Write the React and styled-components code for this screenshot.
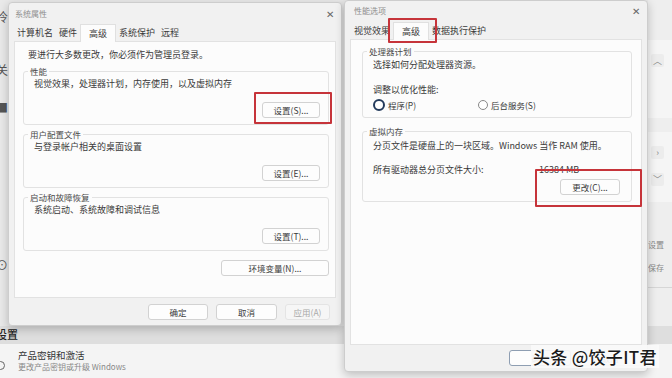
import React from 'react'
import styled, { createGlobalStyle, css } from 'styled-components'

const GlobalStyle = createGlobalStyle`
  html, body { margin: 0; padding: 0; }
  body {
    width: 672px;
    height: 378px;
    overflow: hidden;
    font-family: "Noto Sans CJK SC", "Noto Sans", sans-serif;
  }
  * { box-sizing: border-box; }
`

// 背景的设置页面
const Desktop = styled.div`
  position: relative;
  width: 672px;
  height: 378px;
  overflow: hidden;
  background: #e9e9e9;
  display: flex;
  flex-direction: column;
`
const BgTop = styled.div`
  flex: 1;
  display: flex;
  justify-content: space-between;
`
const LeftRail = styled.div`
  width: 10px;
  display: flex;
  flex-direction: column;
  padding-top: 10px;
`
const RailGlyph = styled.span`
  margin-left: -4px;
  margin-top: ${({ $gap }) => $gap}px;
  font-size: 12px;
  line-height: 14px;
  color: #555;
`
const RightRail = styled.div`
  width: 24px;
  display: flex;
  flex-direction: column;
  padding-top: 40px;
  background: #eeeeee;
`
const RailCard = styled.div`
  height: ${({ $h }) => $h}px;
  margin-top: ${({ $gap }) => $gap || 0}px;
  background: #f5f5f5;
  display: flex;
  flex-direction: column;
  gap: 14px;
  padding: 14px 0 0 3px;
`
const Chevron = styled.span`
  width: 13px;
  height: 13px;
  display: flex;
  align-items: center;
  justify-content: center;
  font-size: 9px;
  color: #888;
  background: #ececec;
  border-radius: 2px;
`
const RailText = styled.span`
  margin-top: ${({ $gap }) => $gap}px;
  font-size: 8px;
  line-height: 11px;
  color: #888;
`
const RailLine = styled.div`
  margin-top: 14px;
  height: 1px;
  background: #d6d6d6;
`
const SectionTitle = styled.div`
  height: 18px;
  margin-left: -4px;
  font-size: 11px;
  line-height: 16px;
  font-weight: 500;
  color: #222;
  background: #dedede;
`
const ItemRow = styled.div`
  height: 34px;
  background: #f4f4f4;
  display: flex;
  align-items: center;
  gap: 13px;
  margin-left: -4px;
`
const ItemIcon = styled.span`
  width: 9px;
  height: 9px;
  border-radius: 50%;
  border: 1.5px solid #666;
  margin-top: 8px;
`
const ItemTexts = styled.div`
  display: flex;
  flex-direction: column;
`
const ItemTitle = styled.span`
  font-size: 9.5px;
  line-height: 12px;
  color: #333;
`
const ItemSub = styled.span`
  font-size: 8px;
  line-height: 12px;
  color: #888;
`

// 对话框
const Window = styled.div`
  position: absolute;
  left: ${({ $x }) => $x}px;
  top: ${({ $y }) => $y}px;
  width: ${({ $w }) => $w}px;
  height: ${({ $h }) => $h}px;
  background: #f1f1f1;
  border: 1px solid #cdcdcd;
  border-radius: 4px;
  box-shadow: 0 3px 10px rgba(0, 0, 0, 0.22);
  display: flex;
  flex-direction: column;
`
const TitleBar = styled.div`
  height: ${({ $h }) => $h}px;
  padding: 0 7px 0 ${({ $pl }) => $pl}px;
  display: flex;
  align-items: center;
  justify-content: space-between;
  font-size: 8px;
  color: #8e8e8e;
`
const Close = styled.span`
  font-size: 10px;
  color: #666;
`
const TabRow = styled.div`
  height: ${({ $h }) => $h}px;
  padding-left: ${({ $pl }) => $pl}px;
  display: flex;
  align-items: flex-end;
`
const Tab = styled.span`
  position: relative;
  height: 16px;
  padding: 0 3px;
  font-size: 9px;
  line-height: 16px;
  color: #3a3a3a;
  ${({ $active }) =>
    $active &&
    css`
      height: 18px;
      line-height: 18px;
      padding: 0 8px;
      background: #fcfcfc;
      border: 1px solid #e0e0e0;
      border-bottom: none;
      margin-bottom: -1px;
      z-index: 1;
    `}
`
const Panel = styled.div`
  height: ${({ $h }) => $h}px;
  margin: 0 5px;
  background: #fcfcfc;
  border: 1px solid #e2e2e2;
  padding: 7px 6px 0 8px;
  display: flex;
  flex-direction: column;
  ${({ $wide }) =>
    $wide &&
    css`
      padding: 6px 9px 0 11px;
    `}
`
const Intro = styled.div`
  margin-left: 5px;
  font-size: 9px;
  line-height: 11px;
  color: #3a3a3a;
`
const Group = styled.fieldset`
  margin: ${({ $mt }) => $mt}px 0 0 0;
  padding: ${({ $pt }) => $pt || 1}px 8px 6px 10px;
  border: 1px solid #e2e2e2;
  border-radius: 3px;
  min-width: 0;
  display: flex;
  flex-direction: column;
`
const Legend = styled.legend`
  margin-left: -6px;
  padding: 0 2px;
  font-size: 8.5px;
  line-height: 11px;
  color: #4a4a4a;
`
const Desc = styled.div`
  margin-top: ${({ $mt }) => $mt || 0}px;
  font-size: 9px;
  line-height: 11px;
  color: #3a3a3a;
`
const ButtonRow = styled.div`
  margin-top: ${({ $mt }) => $mt}px;
  padding-right: ${({ $pr }) => $pr || 0}px;
  display: flex;
  justify-content: flex-end;
`
const Button = styled.span`
  width: ${({ $w }) => $w}px;
  height: 16px;
  display: inline-flex;
  align-items: center;
  justify-content: center;
  font-size: 8.5px;
  color: #3a3a3a;
  background: #fdfdfd;
  border: 1px solid #d2d2d2;
  border-radius: 3px;
  ${({ $primary }) =>
    $primary &&
    css`
      border-color: #8e9eb2;
    `}
  ${({ $disabled }) =>
    $disabled &&
    css`
      color: #a8a8a8;
      background: #f6f6f6;
      border-color: #e4e4e4;
    `}
`
const Highlight = styled.span`
  position: relative;
  display: inline-flex;
  &::after {
    content: '';
    position: absolute;
    inset: ${({ $inset }) => $inset};
    border: 2px solid #c6343a;
    border-radius: 1px;
    pointer-events: none;
    z-index: 2;
  }
`
const BottomBar = styled.div`
  flex: 1;
  display: flex;
  align-items: center;
  justify-content: flex-end;
  gap: ${({ $gap }) => $gap}px;
  padding-right: ${({ $pr }) => $pr}px;
`
const RadioRow = styled.div`
  margin-top: 4px;
  display: grid;
  grid-template-columns: 105px auto;
`
const Radio = styled.span`
  display: flex;
  align-items: center;
  gap: 3px;
  font-size: 8.5px;
  line-height: 11px;
  color: #3a3a3a;
  &::before {
    content: '';
    width: 8px;
    height: 8px;
    border-radius: 50%;
    background: #fff;
    border: ${({ $checked }) => ($checked ? '2.5px solid #243b5c' : '1px solid #888')};
  }
`
const SizeRow = styled.div`
  margin-top: 13px;
  display: grid;
  grid-template-columns: 166px auto;
  font-size: 9px;
  line-height: 11px;
  color: #3a3a3a;
`
const Watermark = styled.div`
  position: absolute;
  left: 531px;
  top: 345px;
  padding: 0 2px;
  font-size: 17px;
  line-height: 23px;
  font-weight: 500;
  color: #1b1b1b;
  letter-spacing: 0.3px;
  background: rgba(250, 250, 250, 0.92);
  text-shadow: 0 0 2px #fff, 0 0 2px #fff;
  z-index: 5;
`

export default function App() {
  return (
    <>
      <GlobalStyle />
      <Desktop>
        <BgTop>
          <LeftRail>
            <RailGlyph $gap={0}>冷</RailGlyph>
            <RailGlyph $gap={39}>关</RailGlyph>
            <RailGlyph $gap={24}>■</RailGlyph>
            <RailGlyph $gap={143}>⊙</RailGlyph>
          </LeftRail>
          <RightRail>
            <RailCard $h={78}>
              <Chevron>︿</Chevron>
            </RailCard>
            <RailCard $h={70} $gap={14}>
              <Chevron>›</Chevron>
              <Chevron>﹀</Chevron>
            </RailCard>
            <RailText $gap={37}>设置</RailText>
            <RailText $gap={12}>保存</RailText>
            <RailLine />
          </RightRail>
        </BgTop>
        <SectionTitle>设置</SectionTitle>
        <ItemRow>
          <ItemIcon />
          <ItemTexts>
            <ItemTitle>产品密钥和激活</ItemTitle>
            <ItemSub>更改产品密钥或升级 Windows</ItemSub>
          </ItemTexts>
        </ItemRow>

        <Window $x={8} $y={2} $w={334} $h={324}>
          <TitleBar $h={20} $pl={6}>
            <span>系统属性</span>
            <Close>✕</Close>
          </TitleBar>
          <TabRow $h={18} $pl={5}>
            <Tab>计算机名</Tab>
            <Tab>硬件</Tab>
            <Tab $active>高级</Tab>
            <Tab>系统保护</Tab>
            <Tab>远程</Tab>
          </TabRow>
          <Panel $h={257}>
            <Intro>要进行大多数更改，你必须作为管理员登录。</Intro>
            <Group $mt={6}>
              <Legend>性能</Legend>
              <Desc>视觉效果，处理器计划，内存使用，以及虚拟内存</Desc>
              <ButtonRow $mt={13}>
                <Highlight $inset="-10px -12px -6px -8px">
                  <Button $w={58}>设置(S)...</Button>
                </Highlight>
              </ButtonRow>
            </Group>
            <Group $mt={4}>
              <Legend>用户配置文件</Legend>
              <Desc>与登录帐户相关的桌面设置</Desc>
              <ButtonRow $mt={13}>
                <Button $w={58}>设置(E)...</Button>
              </ButtonRow>
            </Group>
            <Group $mt={4}>
              <Legend>启动和故障恢复</Legend>
              <Desc>系统启动、系统故障和调试信息</Desc>
              <ButtonRow $mt={13}>
                <Button $w={58}>设置(T)...</Button>
              </ButtonRow>
            </Group>
            <ButtonRow $mt={9}>
              <Button $w={108}>环境变量(N)...</Button>
            </ButtonRow>
          </Panel>
          <BottomBar $gap={8} $pr={11}>
            <Button $w={60}>确定</Button>
            <Button $w={61}>取消</Button>
            <Button $w={45} $disabled>应用(A)</Button>
          </BottomBar>
        </Window>

        <Window $x={344} $y={0} $w={304} $h={372}>
          <TitleBar $h={18} $pl={9}>
            <span>性能选项</span>
            <Close>✕</Close>
          </TitleBar>
          <TabRow $h={20} $pl={6}>
            <Tab>视觉效果</Tab>
            <Highlight $inset="-4px -8px -4px -5px">
              <Tab $active>高级</Tab>
            </Highlight>
            <Tab>数据执行保护</Tab>
          </TabRow>
          <Panel $h={306} $wide>
            <Group $mt={0} $pt={2}>
              <Legend>处理器计划</Legend>
              <Desc>选择如何分配处理器资源。</Desc>
              <Desc $mt={14}>调整以优化性能:</Desc>
              <RadioRow>
                <Radio $checked>程序(P)</Radio>
                <Radio>后台服务(S)</Radio>
              </RadioRow>
            </Group>
            <Group $mt={8} $pt={3}>
              <Legend>虚拟内存</Legend>
              <Desc>分页文件是硬盘上的一块区域。Windows 当作 RAM 使用。</Desc>
              <SizeRow>
                <span>所有驱动器总分页文件大小:</span>
                <span>16384 MB</span>
              </SizeRow>
              <ButtonRow $mt={4} $pr={3}>
                <Highlight $inset="-10px -22px -12px -25px">
                  <Button $w={60}>更改(C)...</Button>
                </Highlight>
              </ButtonRow>
            </Group>
          </Panel>
          <BottomBar $gap={8} $pr={6}>
            <Button $w={62} $primary>确定</Button>
            <Button $w={62}>取消</Button>
          </BottomBar>
        </Window>

        <Watermark>头条 @饺子IT君</Watermark>
      </Desktop>
    </>
  )
}
